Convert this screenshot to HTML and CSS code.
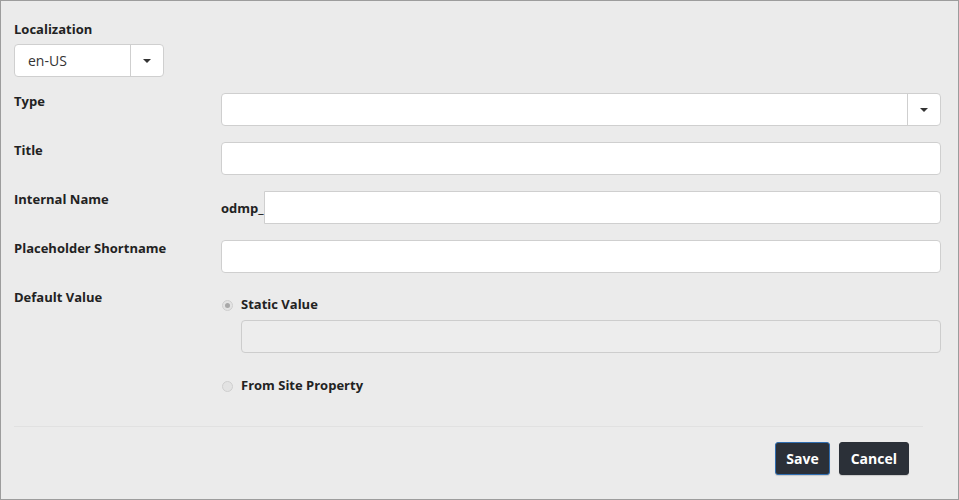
FILE: index.html
```html
<!DOCTYPE html>
<html>
<head>
<meta charset="utf-8">
<link rel="stylesheet" href="styles.css">
</head>
<body>
<div class="dialog">
  <div class="loc">
    <div class="label">Localization</div>
    <div class="select small">
      <span class="value">en-US</span>
      <span class="caret-btn"><span class="caret"></span></span>
    </div>
  </div>
  <div class="form">
    <div class="label row-label">Type</div>
    <div class="select wide">
      <span class="value"></span>
      <span class="caret-btn"><span class="caret"></span></span>
    </div>

    <div class="label row-label">Title</div>
    <div class="input"></div>

    <div class="label row-label">Internal Name</div>
    <div class="prefixed"><span class="prefix">odmp_</span><div class="input grow"></div></div>

    <div class="label row-label">Placeholder Shortname</div>
    <div class="input"></div>

    <div class="label row-label">Default Value</div>
    <div class="options">
      <div class="radio-row"><span class="radio checked"></span><span class="radio-text">Static Value</span></div>
      <div class="input disabled"></div>
      <div class="radio-row second"><span class="radio"></span><span class="radio-text">From Site Property</span></div>
    </div>
  </div>
  <div class="footer">
    <button class="btn focused">Save</button>
    <button class="btn">Cancel</button>
  </div>
</div>
</body>
</html>
```
FILE: styles.css
```css
* { box-sizing: border-box; }
html, body { margin: 0; padding: 0; }
body {
  font-family: "Open Sans", "Liberation Sans", sans-serif;
  color: #222;
  background: #ebebeb;
}
.dialog {
  width: 959px;
  height: 500px;
  border: 1px solid #9c9c9c;
  background: #ebebeb;
  padding: 19px 17px 0 13px;
}
.label {
  font-size: 13px;
  font-weight: 700;
  line-height: 18px;
  color: #222;
}
.loc .label { margin-bottom: 6px; }
.row-label { margin-top: -1px; }
.select {
  display: flex;
  height: 33px;
  background: #fff;
  border: 1px solid #cfcfcf;
  border-radius: 4px;
}
.select.small { width: 150px; }
.select .value {
  flex: 1;
  font-size: 14px;
  line-height: 31px;
  padding-left: 13px;
  color: #333;
}
.caret-btn {
  width: 33px;
  border-left: 1px solid #cfcfcf;
  display: flex;
  align-items: center;
  justify-content: center;
}
.caret {
  width: 0; height: 0;
  border-left: 4px solid transparent;
  border-right: 4px solid transparent;
  border-top: 4px solid #333;
}
.form {
  margin-top: 16px;
  display: grid;
  grid-template-columns: 207px 1fr;
  row-gap: 16px;
}
.input {
  height: 33px;
  background: #fff;
  border: 1px solid #cfcfcf;
  border-radius: 4px;
}
.input.disabled {
  background: #ededed;
  border-color: #cdcdcd;
  margin-left: 20px;
}
.prefixed { display: flex; align-items: center; }
.prefix { font-size: 13px; font-weight: 700; width: 43px; }
.grow { flex: 1; border-radius: 0 4px 4px 0; }
.radio-row { display: flex; align-items: center; height: 31px; padding-bottom: 1px; }
.radio-row.second { margin-top: 17px; }
.radio {
  width: 11px; height: 11px;
  border-radius: 50%;
  border: 1px solid #cfcfcf;
  background: #e3e3e3;
  margin: 3px 8px 0 1px;
  display: flex; align-items: center; justify-content: center;
}
.radio.checked::after {
  content: "";
  width: 5px; height: 5px; border-radius: 50%;
  background: #a8a8a8;
}
.radio-text { font-size: 13px; font-weight: 700; }
.footer {
  margin-top: 25px;
  width: 909px;
  border-top: 1px solid #e1e1e1;
  padding: 15px 14px 0 0;
  display: flex;
  justify-content: flex-end;
  gap: 9px;
}
.btn {
  font-family: "Open Sans", "Liberation Sans", sans-serif;
  font-size: 14px;
  font-weight: 700;
  color: #fff;
  background: #2b3038;
  border: 1px solid #2b3038;
  border-radius: 3px;
  height: 33px;
  padding: 0 11px;
  box-shadow: 0 1px 1px rgba(0,0,0,0.15);
}
.btn.focused { border-color: #2f6db0; padding: 0 10px; }
```
